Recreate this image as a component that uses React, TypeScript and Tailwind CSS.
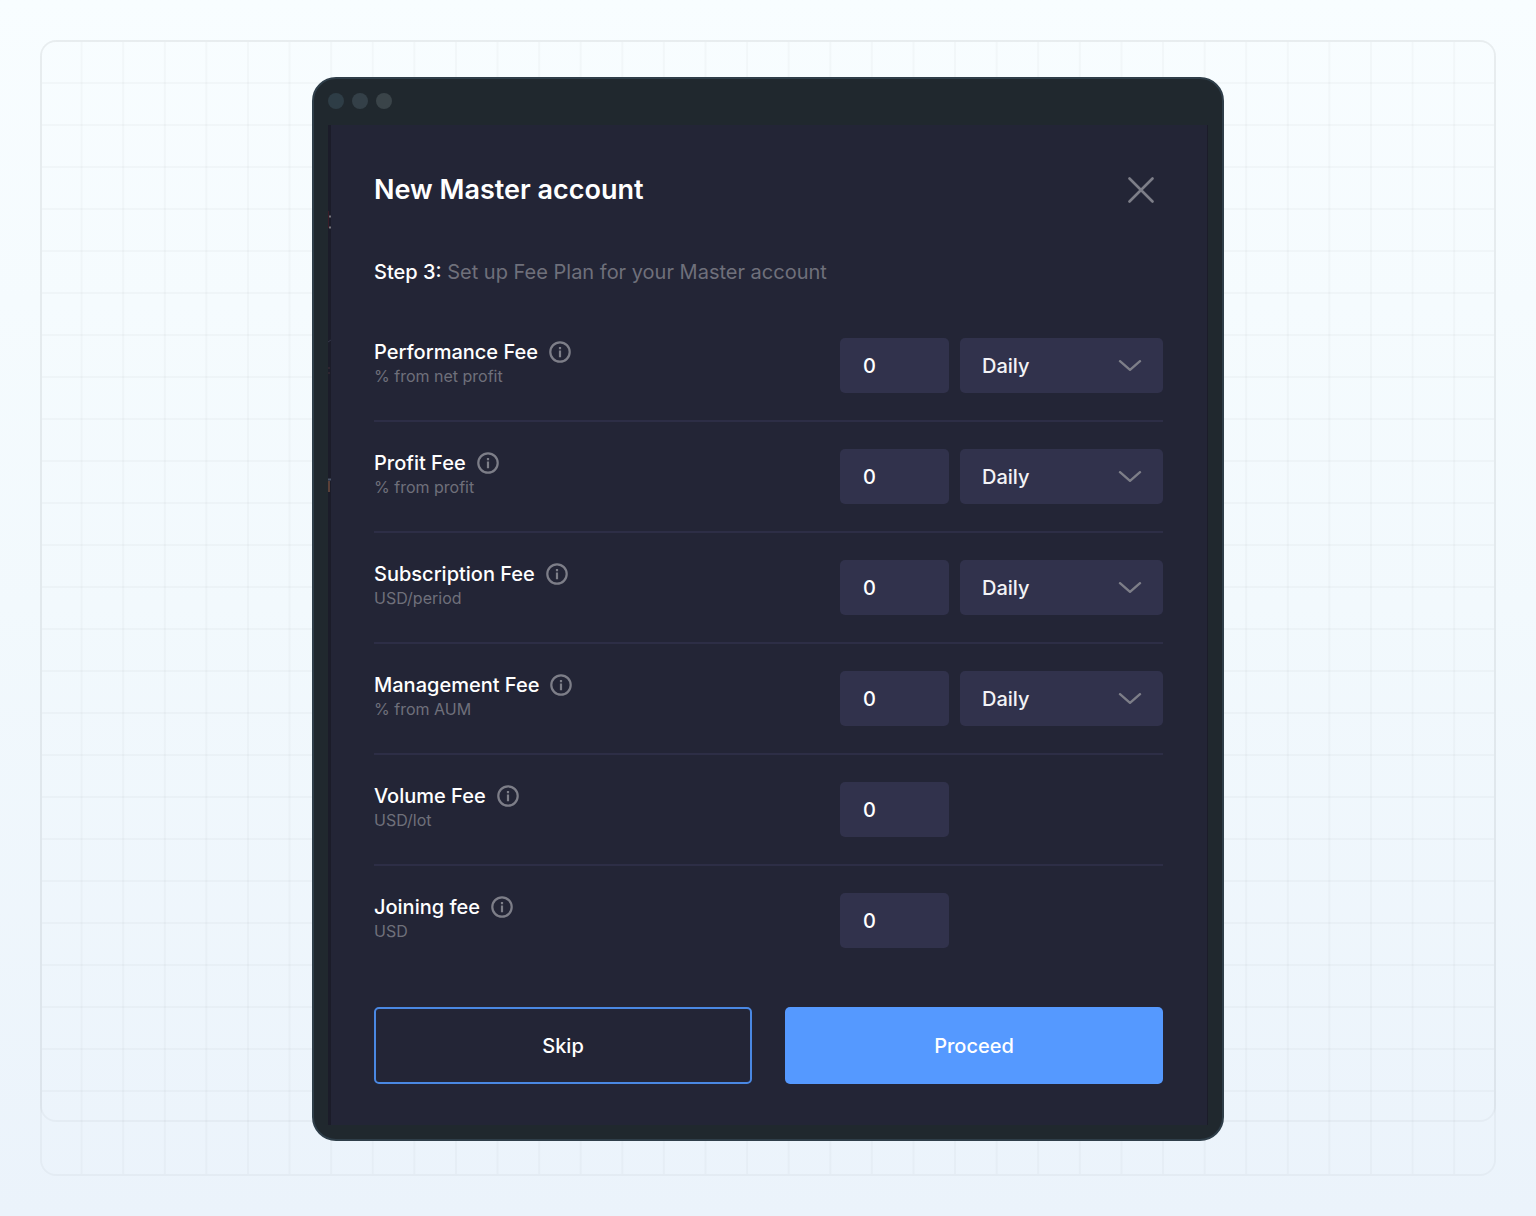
import { useState } from "react";

interface Fee {
  id: string;
  label: string;
  unit: string;
  hasPeriod: boolean;
}

const FEES: Fee[] = [
  { id: "performance", label: "Performance Fee", unit: "% from net profit", hasPeriod: true },
  { id: "profit", label: "Profit Fee", unit: "% from profit", hasPeriod: true },
  { id: "subscription", label: "Subscription Fee", unit: "USD/period", hasPeriod: true },
  { id: "management", label: "Management Fee", unit: "% from AUM", hasPeriod: true },
  { id: "volume", label: "Volume Fee", unit: "USD/lot", hasPeriod: false },
  { id: "joining", label: "Joining fee", unit: "USD", hasPeriod: false },
];

function InfoIcon() {
  return (
    <svg width="22" height="22" viewBox="0 0 22 22" fill="none" aria-hidden="true">
      <circle cx="11" cy="11" r="9.7" stroke="currentColor" strokeWidth="2.2" />
      <path d="M11 6v2.2M11 9.4v6.8" stroke="currentColor" strokeWidth="2.2" />
    </svg>
  );
}

function CloseIcon() {
  return (
    <svg width="26" height="26" viewBox="0 0 26 26" fill="none" aria-hidden="true">
      <path
        d="M1.5 1.5l23 23M24.5 1.5l-23 23"
        stroke="currentColor"
        strokeWidth="2.6"
        strokeLinecap="round"
      />
    </svg>
  );
}

function ChevronIcon() {
  return (
    <svg
      width="24"
      height="12"
      viewBox="0 0 24 12"
      fill="none"
      aria-hidden="true"
      className="pointer-events-none absolute top-[22px] right-[21px] text-[#7d7e88]"
    >
      <path
        d="M2 1.2l10 8.6 10-8.6"
        stroke="currentColor"
        strokeWidth="2.4"
        strokeLinecap="round"
        strokeLinejoin="round"
      />
    </svg>
  );
}

function FeeRow({ fee }: { fee: Fee }) {
  const [value, setValue] = useState("0");
  const [period, setPeriod] = useState("Daily");

  return (
    <div className="flex items-start justify-between border-b-2 border-[#2d2e46] py-[27px] first:pt-0 last:border-b-0 last:pb-0">
      <div className="pt-0.5">
        <div className="flex items-center gap-[11px]">
          <label htmlFor={fee.id} className="text-[20px] leading-6 font-medium text-white">
            {fee.label}
          </label>
          <button type="button" aria-label={`About ${fee.label}`} className="text-[#7d7e88]">
            <InfoIcon />
          </button>
        </div>
        <p className="text-[16px] leading-6 text-[#6f707b]">{fee.unit}</p>
      </div>

      <div className="flex w-[323px] gap-[11px]">
        <input
          id={fee.id}
          type="text"
          inputMode="decimal"
          value={value}
          onChange={(e) => setValue(e.target.value)}
          className="h-[55px] w-[109px] rounded-[5px] bg-[#31324c] px-[23px] text-[20px] font-medium text-white outline-none"
        />
        {fee.hasPeriod && (
          <div className="relative flex-1">
            <select
              aria-label={`${fee.label} period`}
              value={period}
              onChange={(e) => setPeriod(e.target.value)}
              className="h-[55px] w-full appearance-none rounded-[5px] bg-[#31324c] px-[22px] text-[20px] font-medium text-[#f3f3f6] outline-none"
            >
              <option>Daily</option>
              <option>Weekly</option>
              <option>Monthly</option>
            </select>
            <ChevronIcon />
          </div>
        )}
      </div>
    </div>
  );
}

/* Sliver of the page behind the modal, with the clipped ends of its text */
function PageEdge() {
  return (
    <div className="w-[3px] shrink-0 bg-[#1b1c29]">
      <svg width="3" height="400" viewBox="0 0 3 400" aria-hidden="true">
        <path d="M0.5 86v17" stroke="#3a1c28" />
        <path d="M1 91.5h2M1 102.5h2" stroke="#77757c" strokeWidth="2" />
        <path d="M0 217l3-2" stroke="#34364a" />
        <path d="M0 243h2M0 248h2" stroke="#2e2530" strokeWidth="2" />
        <path d="M0 354.5h3" stroke="#4d5568" strokeWidth="2" />
        <path d="M1 356v11" stroke="#5a4038" strokeWidth="2" />
      </svg>
    </div>
  );
}

function GridBackdrop() {
  return (
    <>
      <div className="absolute inset-0 rounded-2xl border-2 border-black/3 bg-[linear-gradient(to_right,rgb(0_0_0/0.025)_2px,transparent_2px)] bg-size-[calc(100%/35)_100%] bg-position-[-1px_0] bg-origin-border bg-clip-padding" />
      <div className="absolute inset-x-0 top-0 bottom-[54px] rounded-2xl border-2 border-black/3 bg-[linear-gradient(to_bottom,rgb(0_0_0/0.025)_2px,transparent_2px)] bg-size-[100%_42px] bg-origin-border bg-clip-padding" />
    </>
  );
}

export default function App() {
  return (
    <div className="min-h-screen bg-linear-to-b from-[#f8fdff] via-[#f2f9fd] to-[#ebf3fb] p-10 font-['Inter',sans-serif]">
      <div className="relative pt-[37px] pb-[35px]">
        <GridBackdrop />

        <div className="relative mx-auto w-full max-w-[912px] rounded-[24px] border-2 border-[#2f3e49] bg-[#20282e] p-[14px]">
          <div className="flex gap-2 pb-4">
            <span className="size-4 rounded-full bg-[#2e3d46]" />
            <span className="size-4 rounded-full bg-[#344048]" />
            <span className="size-4 rounded-full bg-[#3a4449]" />
          </div>

          <div className="flex border-r border-[#1b1c29] bg-[#232536]">
            <PageEdge />

            <main className="flex-1 pt-[51px] pr-11 pb-[41px] pl-[43px]">
              <header className="flex h-7 items-center justify-between pr-[9px]">
                <h1 className="text-[27px] leading-7 font-semibold text-white">
                  New Master account
                </h1>
                <button type="button" aria-label="Close" className="text-[#7d7e88]">
                  <CloseIcon />
                </button>
              </header>

              <p className="mt-14 text-[20px] leading-6 text-[#6f707b]">
                <strong className="font-medium text-white">Step 3:</strong> Set up Fee Plan for
                your Master account
              </p>

              <form className="mt-[54px]" onSubmit={(e) => e.preventDefault()}>
                <div>
                  {FEES.map((fee) => (
                    <FeeRow key={fee.id} fee={fee} />
                  ))}
                </div>

                <div className="mt-[59px] grid grid-cols-2 gap-[33px]">
                  <button
                    type="button"
                    className="h-[77px] rounded-[5px] border-2 border-[#4a88e3] text-[20px] font-medium text-white"
                  >
                    Skip
                  </button>
                  <button
                    type="submit"
                    className="h-[77px] rounded-[5px] bg-[#5599ff] text-[20px] font-medium text-white"
                  >
                    Proceed
                  </button>
                </div>
              </form>
            </main>
          </div>
        </div>
      </div>
    </div>
  );
}
